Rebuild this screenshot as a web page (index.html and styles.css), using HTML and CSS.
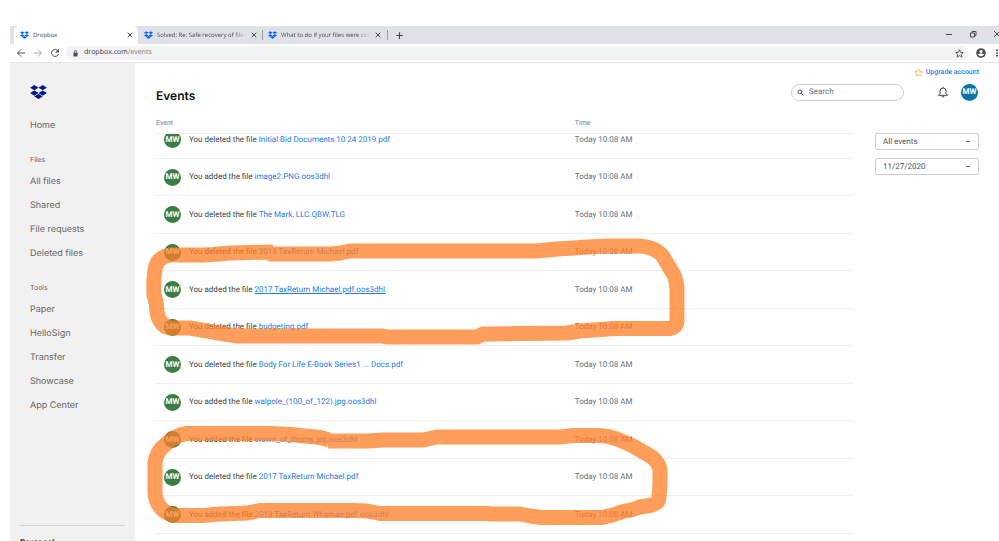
FILE: index.html
```html
<!DOCTYPE html>
<html lang="en">
<head>
<meta charset="utf-8">
<title>Dropbox</title>
<link rel="stylesheet" href="styles.css">
</head>
<body>
<svg width="0" height="0" class="defs" aria-hidden="true">
  <symbol id="dropbox" viewBox="0 0 24 20">
    <path d="M6 0l6 3.8-6 3.8-6-3.8zM18 0l6 3.8-6 3.8-6-3.8zM6 7.8l6 3.8-6 3.8-6-3.8zM18 7.8l6 3.8-6 3.8-6-3.8zM12 12.6l6 3.8-6 3.6-6-3.6z"/>
  </symbol>
  <symbol id="close" viewBox="0 0 6 6"><path d="M.7.7l4.6 4.6M5.3.7L.7 5.3"/></symbol>
  <symbol id="star" viewBox="0 0 10 10"><path d="M5 .9l1.200 2.800 3 .3L7 6l.7 3L5 7.400l-2.700 1.600L3 6 .8 4l3-.3z"/></symbol>
</svg>
<div class="browser">
  <div class="tabs">
    <div class="tab tab-active">
      <svg class="favicon"><use href="#dropbox"/></svg><span class="tab-title">Dropbox</span>
      <button class="tab-close" aria-label="Close tab"><svg><use href="#close"/></svg></button>
    </div>
    <div class="tab">
      <svg class="favicon"><use href="#dropbox"/></svg><span class="tab-title fade">Solved: Re: Safe recovery of files</span>
      <button class="tab-close" aria-label="Close tab"><svg><use href="#close"/></svg></button>
    </div>
    <div class="tab">
      <svg class="favicon"><use href="#dropbox"/></svg><span class="tab-title fade">What to do if your files were corr</span>
      <button class="tab-close" aria-label="Close tab"><svg><use href="#close"/></svg></button>
    </div>
    <button class="new-tab" aria-label="New tab"><svg viewBox="0 0 8 8"><path d="M4 1v6M1 4h6"/></svg></button>
    <div class="window-buttons">
      <button aria-label="Minimize"><svg viewBox="0 0 8 8"><path d="M1 4.500h6"/></svg></button>
      <button aria-label="Restore"><svg viewBox="0 0 8 8"><path d="M1.500 3h4v4h-4zM3 3V1.500h4v4H5.500"/></svg></button>
      <button aria-label="Close"><svg viewBox="0 0 8 8"><path d="M1 1l6 6M7 1L1 7"/></svg></button>
    </div>
  </div>
  <div class="toolbar">
    <button aria-label="Back"><svg viewBox="0 0 10 10"><path d="M9 5H1.500M5 1.500L1.500 5 5 8.500"/></svg></button>
    <button class="dim" aria-label="Forward"><svg viewBox="0 0 10 10"><path d="M1 5h7.500M5 1.500L8.500 5 5 8.500"/></svg></button>
    <button aria-label="Reload"><svg viewBox="0 0 10 10"><path d="M8 3a3.500 3.500 0 1 0 .4 3"/><path class="solid" d="M8.900.8v3.700H5.200z"/></svg></button>
    <div class="address">
      <svg class="lock" viewBox="0 0 6 8"><path class="solid" d="M.5 3h5v4.500h-5z"/><path d="M1.500 3V2a1.500 1.500 0 0 1 3 0v1"/></svg>
      <span class="url">dropbox.com<span>/events</span></span>
      <button class="bookmark" aria-label="Bookmark"><svg><use href="#star"/></svg></button>
    </div>
    <button class="profile" aria-label="Profile"><svg viewBox="0 0 10 10"><circle class="solid" cx="5" cy="5" r="4.800"/><circle class="hole" cx="5" cy="3.500" r="1.600"/><path class="hole" d="M1.800 6.500Q5 4.600 8.200 6.500 7 8.200 5 8.200T1.800 6.500z"/></svg></button>
    <button class="more" aria-label="Menu"><svg viewBox="0 0 4 10"><path class="solid" d="M1 1.500h2v1.500H1zM1 4.300h2v1.500H1zM1 7.100h2v1.500H1z"/></svg></button>
  </div>
  <div class="page">
    <nav class="sidebar">
      <a href="#" class="logo" aria-label="Dropbox"><svg><use href="#dropbox"/></svg></a>
      <a href="#">Home</a>
      <h2>Files</h2>
      <a href="#">All files</a>
      <a href="#">Shared</a>
      <a href="#">File requests</a>
      <a href="#">Deleted files</a>
      <h2>Tools</h2>
      <a href="#">Paper</a>
      <a href="#">HelloSign</a>
      <a href="#">Transfer</a>
      <a href="#">Showcase</a>
      <a href="#">App Center</a>
      <div class="plan">Personal</div>
    </nav>
    <main>
      <div class="upgrade"><svg><use href="#star"/></svg><a href="#">Upgrade account</a></div>
      <header>
        <h1>Events</h1>
        <label class="search">
          <svg viewBox="0 0 8 8"><circle cx="3.300" cy="3.300" r="2.200"/><path d="M5 5l2.300 2.300"/></svg>
          <input type="search" placeholder="Search" aria-label="Search">
        </label>
        <button class="bell" aria-label="Notifications"><svg viewBox="0 0 12 12"><path d="M1.500 9.300h9L9 7.500V5a3 3 0 0 0-6 0v2.500zM6 2V.8M4.800 10.500q1.200 1 2.400 0"/></svg></button>
        <button class="avatar account" aria-label="Account">MW</button>
      </header>
      <div class="content">
        <table>
          <thead><tr><th>Event</th><th>Time</th></tr></thead>
          <tbody>
            <tr><td><span class="avatar">MW</span>You deleted the file <a href="#">Initial Bid Documents 10 24 2019.pdf</a></td><td>Today 10:08 AM</td></tr>
            <tr><td><span class="avatar">MW</span>You added the file <a href="#">image2.PNG.oos3dhl</a></td><td>Today 10:08 AM</td></tr>
            <tr><td><span class="avatar">MW</span>You deleted the file <a href="#">The Mark, LLC.QBW.TLG</a></td><td>Today 10:08 AM</td></tr>
            <tr><td><span class="avatar">MW</span>You deleted the file <a href="#">2018 TaxReturn Michael.pdf</a></td><td>Today 10:08 AM</td></tr>
            <tr><td><span class="avatar">MW</span>You added the file <a href="#" class="hovered">2017 TaxReturn Michael.pdf.oos3dhl</a></td><td>Today 10:08 AM</td></tr>
            <tr><td><span class="avatar">MW</span>You deleted the file <a href="#">budgeting.pdf</a></td><td>Today 10:08 AM</td></tr>
            <tr><td><span class="avatar">MW</span>You deleted the file <a href="#">Body For Life E-Book Series1 ... Docs.pdf</a></td><td>Today 10:08 AM</td></tr>
            <tr><td><span class="avatar">MW</span>You added the file <a href="#">walpole_(100_of_122).jpg.oos3dhl</a></td><td>Today 10:08 AM</td></tr>
            <tr><td><span class="avatar">MW</span>You added the file <a href="#">crown_of_thorns.jpg.oos3dhl</a></td><td>Today 10:08 AM</td></tr>
            <tr><td><span class="avatar">MW</span>You deleted the file <a href="#">2017 TaxReturn Michael.pdf</a></td><td>Today 10:08 AM</td></tr>
            <tr><td><span class="avatar">MW</span>You added the file <a href="#">2018 TaxReturn Whamae.pdf.oos3dhl</a></td><td>Today 10:08 AM</td></tr>
          </tbody>
        </table>
        <div class="filters">
          <select aria-label="Event type"><option>All events</option></select>
          <select aria-label="Date"><option>11/27/2020</option></select>
        </div>
      </div>
    </main>
  </div>
</div>
<svg class="marker" width="999" height="541" viewBox="0 0 999 541" aria-hidden="true">
  <path d="M273 252L250 252.500 230 253 213 254.500 203 255H180Q163 253 157 263 153 271 154 295 157 303 157 313 161 328 172 328H190L213 332 237 336H383L386 337H477L483 334 520 333.500 567 333 580 331 607 329 613 328.500H670Q677 327 677 320V288Q676 279 674 275L662 255Q654 247 640 246H607L587 247 574 248 557 249 537 251H350L340 253 330 254H268"/>
  <path d="M329 440L320 437.500 305 436 290 434.500 273 433.500H187Q175 435 165 445 156 452 155 463V493Q156 504 163 510 170 516 178 515.500H203L220 514 247 513 260 510.500H353L367 511 380 513.500H487L491 514H520L530 516 542 517.500H602L613 515 623 511.500 633 509.500 640 507 652 505Q659 503 659 497L660 485V470Q659 463 652 457L633 446 617 439Q609 436 600 435.500H573L560 437H437L423 440H383L367 441H328"/>
</svg>
</body>
</html>
```
FILE: styles.css
```css
* { box-sizing: border-box; }
body {
  margin: 0;
  background: #fff;
  font-family: Roboto, "Liberation Sans", sans-serif;
  font-size: 8px;
  line-height: 12px;
  color: #3d464d;
  text-rendering: geometricPrecision;
  overflow: hidden;
}
button { padding: 0; border: 0; background: none; color: inherit; font: inherit; flex: none; }
button, input, select { text-rendering: inherit; }
a { color: inherit; text-decoration: none; }
svg { display: block; fill: none; stroke: currentColor; flex: none; }
.solid { fill: currentColor; stroke: none; }
.hole { fill: #fff; stroke: none; }
.defs { position: absolute; }

.browser { display: flex; flex-direction: column; height: 100vh; padding: 26px 0 0 10px; overflow: hidden; }
.tabs {
  display: flex;
  flex: none;
  height: 18px;
  padding-left: 4px;
  background: #dee1e6;
  color: #45494d;
  font-family: "Open Sans", sans-serif;
  font-size: 6px;
}
.tab { display: flex; align-items: center; width: 124px; padding: 0 5px 0 6px; position: relative; }
.tab + .tab + .tab::before { content: ""; width: 1px; height: 10px; background: #9da1a6; position: absolute; left: 0; top: 4px; }
.tab-active { background: #fff; border-radius: 5px 5px 0 0; }
.favicon { width: 9px; height: 8px; margin-right: 4px; fill: #0061fe; stroke: none; }
.tab-title { flex: 1; white-space: nowrap; overflow: hidden; }
.fade { mask-image: linear-gradient(to right, #000 86%, transparent); }
.tab-close { margin-left: 5px; }
.tab-close svg { width: 6px; height: 6px; }
.new-tab { display: flex; align-items: center; width: 20px; margin-left: 1px; padding-left: 8px; position: relative; }
.new-tab::before { content: ""; width: 1px; height: 10px; background: #9da1a6; position: absolute; left: 0; top: 4px; }
.new-tab svg { width: 9px; height: 9px; }
.window-buttons { display: flex; gap: 16px; margin: 0 -2px 3px auto; }
.window-buttons svg { width: 8px; height: 8px; }

.toolbar {
  display: flex;
  align-items: center;
  flex: none;
  gap: 7px;
  height: 19px;
  padding: 0 0 0 6px;
  border-bottom: 1px solid #e3e5e8;
  color: #4a4e52;
}
.toolbar svg { width: 10px; height: 10px; }
.dim { color: #a2a5a8; }
.address {
  display: flex;
  align-items: center;
  flex: 1;
  height: 14px;
  margin-left: -1px;
  padding: 0 5px 0 7px;
  border-radius: 7px;
  background: #f1f3f4;
}
.address .lock { width: 5px; height: 7px; margin-right: 6px; }
.url { flex: 1; font: 7px/14px "Open Sans", sans-serif; color: #33373b; }
.url span { color: #777b80; }
.toolbar .bookmark svg { width: 9px; height: 9px; }
.toolbar .more { margin-left: 2px; }
.toolbar .more svg { width: 4px; }

.page { display: flex; flex: 1; min-height: 0; }
.sidebar {
  display: flex;
  flex-direction: column;
  flex: none;
  width: 125px;
  padding: 19px 10px 0;
  background: #f1f1f1;
  color: #666;
  font-family: Inter, sans-serif;
  font-size: 9px;
}
.sidebar a { padding-left: 10px; height: 24px; line-height: 24px; flex: none; }
.sidebar .logo { height: 32px; padding-top: 3px; }
.logo svg { width: 17px; height: 14px; fill: #061b82; stroke: none; }
.sidebar h2 { margin: 16px 0 4px; padding-left: 10px; font-size: 7px; font-weight: 400; line-height: 12px; }
.plan { margin-top: 107px; padding-top: 10px; border-top: 1px solid #d3d3d3; font-size: 8px; font-weight: 700; color: #222; flex: none; }

main { flex: 1; min-width: 0; padding: 3px 20px 0 21px; }
.upgrade { display: flex; justify-content: flex-end; align-items: center; gap: 3px; font-size: 7px; font-weight: 500; color: #267df0; }
.upgrade svg { width: 9px; height: 9px; color: #e5c268; }
header { display: flex; align-items: center; height: 28px; }
h1 { flex: 1; margin: 8px 0 0; font: 600 12px/16px Inter, sans-serif; color: #111; }
.search {
  display: flex;
  align-items: center;
  width: 113px;
  height: 17px;
  margin-right: 33px;
  padding: 0 5px;
  border: 1px solid #ccced0;
  border-radius: 9px;
}
.search svg { width: 7px; height: 7px; margin-right: 5px; color: #333d4a; }
.search input { flex: 1; min-width: 0; padding: 0; border: 0; outline: 0; background: none; font: inherit; color: inherit; }
.search input::placeholder { color: #637282; opacity: 1; }
.bell { margin-right: 12px; color: #3d4654; }
.bell svg { width: 12px; height: 12px; }
.avatar {
  display: inline-flex;
  align-items: center;
  justify-content: center;
  width: 17px;
  height: 17px;
  margin: 0 8px;
  border-radius: 50%;
  background: #3b7e43;
  color: #fff;
  font-weight: 700;
  flex: none;
}
.account { margin: 0 1px 0 0; background: #0a76a4; }

.content { display: flex; align-items: flex-start; gap: 21px; }
table, thead, tbody { display: block; }
table { flex: 1; min-width: 0; }
tr { display: flex; align-items: center; border-bottom: 1px solid #eeeff0; }
th, td { padding: 0; flex: 2; font-weight: 400; text-align: left; color: #637282; white-space: nowrap; }
th:first-child, td:first-child { flex: 3; color: #3d464d; }
th, th:first-child { font-size: 7px; color: #75818c; }
thead tr { height: 28px; padding-top: 7px; }
tbody { overflow: hidden; }
tbody tr { height: 38px; }
tbody tr:nth-child(even) { height: 37px; }
tbody tr:first-child { margin-top: -13px; }
td:first-child { display: flex; align-items: center; white-space: pre; }
td a { color: #267be6; }
.hovered { text-decoration: underline; }
.filters { display: flex; flex-direction: column; gap: 8px; width: 104px; margin-top: 27px; }
select {
  appearance: none;
  height: 17px;
  padding: 0 7px;
  border: 1px solid #c9cdd1;
  border-radius: 2px;
  background: #fff linear-gradient(#56606a, #56606a) no-repeat right 8px center / 4px 1px;
  color: #4b555f;
  font: inherit;
}
.marker { position: absolute; left: 0; top: 0; fill: none; stroke: #ff7f27; stroke-width: 15; stroke-linejoin: round; }
.marker path { opacity: .76; }
```
